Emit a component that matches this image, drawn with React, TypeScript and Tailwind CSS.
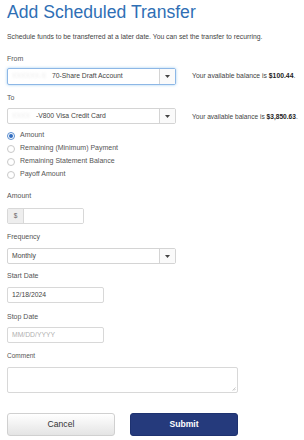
import { useState } from "react";

function Caret() {
  return (
    <svg width="5" height="3" viewBox="0 0 5 3" className="fill-[#444]">
      <path d="M0 0h5L2.5 3z" />
    </svg>
  );
}

function FakeSelect({
  hidden,
  hiddenWidth,
  label,
  focused,
  height,
}: {
  hidden?: string;
  hiddenWidth?: string;
  label: string;
  focused?: boolean;
  height: string;
}) {
  return (
    <div
      className={`flex w-[169px] shrink-0 ${height} items-stretch rounded-[2px] border bg-white ${
        focused ? "border-[#8db7e6] shadow-[0_0_3px_rgba(102,175,233,0.6)]" : "border-[#d4d4d4]"
      }`}
    >
      <div className="flex flex-1 items-center overflow-hidden whitespace-nowrap pl-[4px] text-[6.8px] text-[#444]">
        {hidden && (
          <span className={`${hiddenWidth} shrink-0 text-[#ececec] blur-[1px]`}>{hidden}</span>
        )}
        <span>{label}</span>
      </div>
      <div className="flex w-[16px] items-center justify-center border-l border-[#d4d4d4] bg-[#fafafa]">
        <Caret />
      </div>
    </div>
  );
}

function Radio({ label, checked }: { label: string; checked?: boolean }) {
  return (
    <label className="flex h-[13px] items-center gap-[5px] text-[7px] text-[#555]">
      <span
        className={`flex h-[8px] w-[8px] items-center justify-center rounded-full border ${
          checked ? "border-[#5b8fd1] bg-white" : "border-[#c8c8c8] bg-white"
        }`}
      >
        {checked && <span className="h-[4px] w-[4px] rounded-full bg-[#2f6cc0]" />}
      </span>
      {label}
    </label>
  );
}

export default function App() {
  const [payType, setPayType] = useState("amount");

  const options = [
    { id: "amount", label: "Amount" },
    { id: "min", label: "Remaining (Minimum) Payment" },
    { id: "stmt", label: "Remaining Statement Balance" },
    { id: "payoff", label: "Payoff Amount" },
  ];

  return (
    <div className="h-[440px] w-[304px] overflow-hidden bg-white px-[7px] pt-[2px] font-['Liberation_Sans',Arial,sans-serif]">
      <h1 className="text-[17.6px] leading-[20px] text-[#2f6fb5]">Add Scheduled Transfer</h1>
      <p className="mt-[10px] whitespace-nowrap text-[6.8px] leading-[10px] text-[#444]">
        Schedule funds to be transferred at a later date. You can set the transfer to recurring.
      </p>

      <div className="mt-[12px] text-[7px] leading-[10px] text-[#555]">From</div>
      <div className="mt-[4px] flex items-center gap-[16px]">
        <FakeSelect hidden="XXXXXX-S" hiddenWidth="w-[40px]" label="70-Share Draft Account" focused height="h-[17px]" />
        <div className="whitespace-nowrap text-[6.8px] text-[#444]">
          Your available balance is <b className="text-[#222]">$100.44</b>.
        </div>
      </div>

      <div className="mt-[8px] text-[7px] leading-[10px] text-[#555]">To</div>
      <div className="mt-[5px] flex items-center gap-[16px]">
        <FakeSelect hidden="XXXX" hiddenWidth="w-[24px]" label="-V800 Visa Credit Card" height="h-[16px]" />
        <div className="mt-[2px] whitespace-nowrap text-[6.6px] text-[#444]">
          Your available balance is <b className="text-[#222]">$3,850.63</b>.
        </div>
      </div>

      <div className="mt-[5px] flex flex-col">
        {options.map((o) => (
          <div key={o.id} onClick={() => setPayType(o.id)}>
            <Radio label={o.label} checked={payType === o.id} />
          </div>
        ))}
      </div>

      <div className="mt-[10px] text-[7px] leading-[10px] text-[#555]">Amount</div>
      <div className="mt-[7px] flex h-[16px] w-[77px] overflow-hidden rounded-[2px] border border-[#d8d8d8]">
        <div className="flex w-[16px] items-center justify-center border-r border-[#d8d8d8] bg-[#eeeeee] text-[6.5px] text-[#666]">
          $
        </div>
        <div className="flex-1 bg-white" />
      </div>

      <div className="mt-[8px] text-[7px] leading-[10px] text-[#555]">Frequency</div>
      <div className="mt-[6px]">
        <FakeSelect label="Monthly" height="h-[16px]" />
      </div>

      <div className="mt-[7px] text-[7px] leading-[10px] text-[#555]">Start Date</div>
      <div className="mt-[6px] flex h-[16px] w-[97px] items-center rounded-[2px] border border-[#d8d8d8] pl-[4px] text-[6.8px] text-[#444]">
        12/18/2024
      </div>

      <div className="mt-[9px] text-[7px] leading-[10px] text-[#555]">Stop Date</div>
      <div className="mt-[5px] flex h-[16px] w-[97px] items-center rounded-[2px] border border-[#d8d8d8] pl-[4px] text-[6.8px] text-[#b0b0b0]">
        MM/DD/YYYY
      </div>

      <div className="mt-[8px] text-[6.5px] leading-[10px] text-[#555]">Comment</div>
      <div className="relative mt-[6px] h-[26px] w-[231px] rounded-[2px] border border-[#d8d8d8] bg-white">
        <svg width="4" height="4" viewBox="0 0 4 4" className="absolute bottom-[1px] right-[1px] stroke-[#aaa]">
          <path d="M0.5 3.5L3.5 0.5M2 3.5L3.5 2" strokeWidth="0.6" />
        </svg>
      </div>

      <div className="mt-[20px] flex gap-[15px]">
        <button className="h-[23px] w-[108px] rounded-[3px] border border-[#d0d0d0] bg-gradient-to-b from-white to-[#e4e4e4] text-[8.6px] text-[#333]">
          Cancel
        </button>
        <button className="h-[23px] w-[108px] rounded-[3px] border border-[#1e3270] bg-[#253a7c] text-[8.6px] font-bold text-white">
          Submit
        </button>
      </div>
    </div>
  );
}
